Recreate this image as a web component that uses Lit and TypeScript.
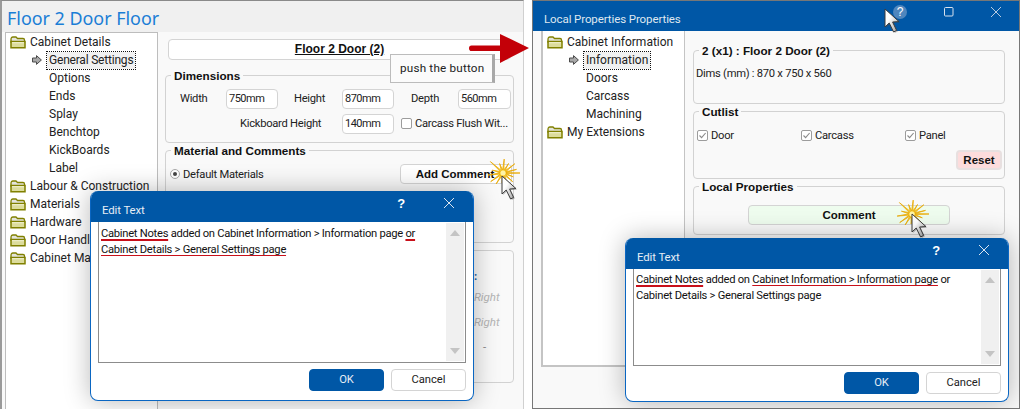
import { LitElement, html, css, svg } from "lit";
import { customElement } from "lit/decorators.js";

const folder = html`<svg class="folder" width="16" height="13" viewBox="0 0 16 13">
  <path d="M1 3.5 Q1 1 3 1 H6 L7.5 2.5 H13 Q14.5 2.5 14.5 4 V6 H1 Z" fill="#e4e4dc" stroke="#808000" stroke-width="1.3"/>
  <path d="M1 5.5 H15 V11.8 H1 Z" fill="#dcdc9c" stroke="#808000" stroke-width="1.5"/>
  <path d="M2 6.7 H14" stroke="#f6f6d8" stroke-width="1"/>
</svg>`;

const arrowIcon = html`<svg class="arrow-ic" width="10" height="10" viewBox="0 0 10 10">
  <path d="M.5 3 H4.5 V.6 L9.4 5 L4.5 9.4 V7 H.5 Z" fill="#a8a8a8" stroke="#4c4c4c" stroke-width="1"/>
</svg>`;

function starPoints(): string {
  const rays: [number, number][] = [
    [0, 17], [20, 11], [42, 13], [68, 11], [95, 10], [122, 13], [145, 15], [172, 15],
    [195, 11], [222, 17], [250, 10], [275, 14], [300, 11], [322, 15], [345, 14],
  ];
  const pts: string[] = [];
  rays.forEach(([a, r], i) => {
    const next = rays[(i + 1) % rays.length][0] + (i === rays.length - 1 ? 360 : 0);
    const mid = ((a + next) / 2) * Math.PI / 180;
    const rad = a * Math.PI / 180;
    pts.push(`${(20 + r * Math.cos(rad)).toFixed(1)},${(20 + r * Math.sin(rad)).toFixed(1)}`);
    pts.push(`${(20 + 3 * Math.cos(mid)).toFixed(1)},${(20 + 3 * Math.sin(mid)).toFixed(1)}`);
  });
  return pts.join(" ");
}

const cursorPath = svg`<path d="M1 1 L1 19 L5.2 15 L9.6 24 L12.6 22.4 L8.6 14 L15 13.6 Z" fill="#4a4a4a" opacity=".35" transform="translate(1.2 1)"/>
  <path d="M1 1 L1 19 L5.2 15 L9.6 24 L12.6 22.4 L8.6 14 L15 13.6 Z" fill="url(#cg)" stroke="#3c3c3c" stroke-width="1"/>`;

const cursorDefs = svg`<defs><linearGradient id="cg" x1="0" y1="0" x2="1" y2="1"><stop offset=".35" stop-color="#fff"/><stop offset="1" stop-color="#9a9a9a"/></linearGradient></defs>`;

@customElement("app-root")
export class AppRoot extends LitElement {
  static styles = css`
    :host { display: block; width: 1020px; height: 409px; position: relative; overflow: hidden; background: #fff;
      font-family: "Roboto", "Noto Sans", sans-serif; font-size: 11.2px; letter-spacing: -.27px; color: #222; }
    .win { position: absolute; top: 0; bottom: 0; display: flex; flex-direction: column; background: #f9f9f9; box-sizing: border-box; }
    .win.l { left: 0; width: 524px; border-top: 1px solid #8a8a8a; border-left: 2px solid #9a9a9a; border-right: 1px solid #d0d0d0; }
    .win.r { left: 532px; width: 488px; border: 1px solid #777; }
    .lhead { height: 31px; flex: none; background: #f0f0f0; padding-left: 5px; box-sizing: border-box; font-family: "Noto Sans", sans-serif; font-size: 17.9px; letter-spacing: 0; color: #1b7ed6; line-height: 35px; }
    .rhead { height: 30px; flex: none; background: #0057a6; padding: 11px 0 0 11px; box-sizing: border-box; color: #dfe7f0; line-height: 14px; font-size: 11.5px; letter-spacing: -.1px; }
    .body { flex: 1; display: flex; min-height: 0; }
    .tree { background: #fff; box-sizing: border-box; flex: none; font-size: 12px; letter-spacing: 0; }
    .win.l .tree { width: 153px; margin-left: 3px; border: 1px solid #bdbdbd; border-bottom: 0; height: 378px; overflow: hidden; }
    .win.l .sel { letter-spacing: -.2px; }
    .win.r .tree { width: 144px; margin-left: 8px; height: 336px; padding-top: 2px; border: 1px solid #c4c4c4; border-width: 0 1px 2px 2px; }
    .ti { height: 18px; display: flex; align-items: center; line-height: 18px; white-space: nowrap; position: relative; }
    .ti.top { padding-left: 4px; gap: 4px; }
    .ti.sub { padding-left: 43px; }
    .ti .arrow-ic { position: absolute; left: 26px; top: 4px; }
    .sel { outline: 1px dotted #111; background: #f1f1f1; padding: 0 2px; margin-left: -2px; height: 17px; line-height: 17px; }
    .panel { flex: 1; padding: 7px 9px 0 7px; min-width: 0; }
    .win.r .panel { padding: 19px 14px 0 8px; }
    .title-btn { margin-left: 3px; width: 343px; height: 21px; box-sizing: border-box; background: #fff; border: 1px solid #d4d4d4; border-radius: 4px;
      font: bold 12px "Liberation Sans", sans-serif; letter-spacing: 0; text-align: center; line-height: 18px; text-decoration: underline; color: #111; }
    .group { border: 1px solid #d2d2d2; border-radius: 4px; box-sizing: border-box; margin-top: 7px; }
    .legend { font: bold 11.7px "Liberation Sans", sans-serif; letter-spacing: 0; color: #111; background: #f9f9f9; width: fit-content; margin: -7px 0 0 5px; padding: 0 3px; height: 14px; line-height: 14px; }
    .grid { display: grid; grid-template-columns: 46px 52px 16px 48px 52px 17px 47px 53px; grid-auto-rows: 20px; row-gap: 5px; margin: 6px 0 0 14px; align-items: center; }
    .grid > span { padding-bottom: 2px; }
    .field { background: #fff; border: 1px solid #d4d4d4; border-radius: 4px; height: 20px; box-sizing: border-box; padding-left: 2px; line-height: 18px; font-size: 11px; letter-spacing: -.5px; }
    .kick { grid-column: 1 / 5; padding-left: 60px; }
    .flush { grid-column: 6 / 9; display: flex; align-items: center; gap: 3px; padding-left: 7px; white-space: nowrap; }
    .cb { width: 11px; height: 11px; border: 1px solid #9c9c9c; border-radius: 2px; background: #fff; box-sizing: border-box; flex: none; display: inline-flex; }
    .cb svg { display: block; }
    .matrow { display: flex; justify-content: space-between; align-items: flex-start; margin: 6px 1px 0 4px; }
    .radio { display: flex; align-items: center; gap: 3px; height: 20px; }
    .rd { width: 10px; height: 10px; border: 1px solid #aaa; border-radius: 50%; box-sizing: border-box; display: grid; place-items: center; background: #fff; }
    .rd::after { content: ""; width: 4px; height: 4px; border-radius: 50%; background: #444; }
    .btn { border: 1px solid #d4d4d4; border-radius: 4px; background: #fff; box-sizing: border-box; font: bold 11.5px "Liberation Sans", sans-serif; letter-spacing: 0; text-align: center; color: #111; white-space: nowrap; }
    .add { width: 112px; height: 20px; line-height: 18px; padding-right: 2px; }
    .rights { display: flex; flex-direction: column; align-items: flex-start; margin: 17px 0 0 308px; color: #b5b5b5; font-style: italic; font-size: 11.5px; letter-spacing: 0; }
    .rights span { height: 25px; line-height: 16px; }
    .rights .glyph { height: 21px; color: #1a5fa8; font-style: normal; font-weight: bold; }
    .rights .dash { height: 16px; color: #888; font-style: normal; padding-left: 9px; }
    .dims { margin: 8px 0 0 2px; line-height: 16px; }
    .checks { display: grid; grid-template-columns: 104px 104px auto; margin: 8px 0 0 3px; }
    .chk { display: flex; align-items: center; gap: 3px; height: 16px; }
    .resetrow { display: flex; justify-content: flex-end; margin: 7px 2px 0 0; }
    .reset { width: 46px; height: 20px; line-height: 16px; background: #fddcdc; border: 2px solid #e8e0e0; border-radius: 4px; }
    .comment { margin: 11px 0 0 54px; width: 202px; height: 20px; line-height: 18px; background: #eefcee; }
    .dlg { position: absolute; display: flex; flex-direction: column; background: #fff; border: 1px solid #0a66c2; border-top: 0; border-radius: 8px; box-sizing: border-box; box-shadow: 0 0 26px rgba(0,0,0,.28); overflow: hidden; }
    .dlg.l { left: 90px; top: 191px; width: 384px; height: 210px; }
    .dlg.r { left: 625px; top: 238px; width: 384px; height: 164px; }
    .dh { height: 31px; flex: none; background: #0057a6; color: #e6edf5; display: flex; align-items: center; padding: 6px 0 0 11px; box-sizing: border-box; position: relative; font-size: 11.4px; letter-spacing: -.1px; }
    .dh .q { position: absolute; right: 68px; top: 5px; font: bold 13px "Liberation Sans", sans-serif; color: #fff; }
    .dh svg { position: absolute; right: 18px; top: 6px; }
    .ta { flex: 1; margin: 0 7px; border: 1px solid #8c8c8c; border-top: 0; display: flex; min-height: 0; }
    .txt { flex: 1; padding: 4px 0 0 2px; line-height: 16px; color: #111; white-space: nowrap; overflow: hidden; }
    .dlg.r .txt { padding-top: 3px; }
    .u { text-decoration: underline; text-decoration-color: #c8101a; text-underline-offset: 2px; text-decoration-thickness: 1px; }
    .u2 { text-decoration-thickness: 2px; }
    .sb { width: 18px; flex: none; margin: 1px; background: #f0f0f0; display: flex; flex-direction: column; justify-content: space-between; align-items: center; padding: 7px 0; box-sizing: border-box; }
    .tri-u { width: 0; height: 0; border: 5px solid transparent; border-top: 0; border-bottom: 6px solid #c4c4c4; }
    .tri-d { width: 0; height: 0; border: 5px solid transparent; border-bottom: 0; border-top: 6px solid #c4c4c4; }
    .df { flex: none; display: flex; justify-content: flex-end; gap: 7px; padding: 6px 7px 9px 0; }
    .dlg.r .df { padding: 6px 7px 7px 0; }
    .dbtn { width: 75px; height: 22px; box-sizing: border-box; border-radius: 4px; border: 1px solid #d4d4d4; background: #fff; text-align: center; line-height: 20px; color: #222; font-size: 11.2px; letter-spacing: 0; }
    .dbtn.ok { background: #0057a6; color: #e6edf5; border-color: #0057a6; }
    .tip { position: absolute; left: 390px; top: 54px; width: 105px; height: 29px; box-sizing: border-box; background: #fbfbfb; border: 1px solid #bcbcbc; border-right: 3px solid #a8a8a8; padding-left: 9px; line-height: 26px; font-size: 11.7px; letter-spacing: .2px; white-space: nowrap; }
    .overlay { position: absolute; pointer-events: none; overflow: visible; }
    .help { position: absolute; left: 893px; top: 5px; width: 14px; height: 14px; border-radius: 50%; background: #4f86bd; color: #fff; font: 12px "Liberation Sans", sans-serif; text-align: center; line-height: 14px; }
  `;

  private star(x: number, y: number) {
    return html`<svg class="overlay" style="left:${x - 20}px;top:${y - 20}px" width="40" height="40" viewBox="0 0 40 40">
      <polygon points=${starPoints()} fill="#f7d23a" stroke="#e8a908" stroke-width=".8"/>
      <circle cx="20" cy="20" r="2.5" fill="#fff3a8"/></svg>`;
  }
  private cursor(x: number, y: number) {
    return html`<svg class="overlay" style="left:${x - 1}px;top:${y - 1}px" width="18" height="27" viewBox="0 0 18 27">${cursorDefs}${cursorPath}</svg>`;
  }
  private closeX(c = "#dbe5f0") {
    return html`<svg width="12" height="12" viewBox="0 0 12 12"><path d="M1 1 L11 11 M11 1 L1 11" stroke=${c} stroke-width="1" fill="none"/></svg>`;
  }
  private check() {
    return html`<span class="cb"><svg width="9" height="9" viewBox="0 0 9 9"><path d="M1.5 4.5 L3.6 6.6 L7.6 2" stroke="#8a8a8a" stroke-width="1.1" fill="none"/></svg></span>`;
  }
  private dialog(cls: string, body: unknown) {
    return html`<div class="dlg ${cls}">
      <div class="dh">Edit Text<span class="q">?</span>${this.closeX()}</div>
      <div class="ta"><div class="txt">${body}</div><div class="sb"><i class="tri-u"></i><i class="tri-d"></i></div></div>
      <div class="df"><div class="dbtn ok">OK</div><div class="dbtn">Cancel</div></div>
    </div>`;
  }

  render() {
    const subsL = ["Options", "Ends", "Splay", "Benchtop", "KickBoards", "Label"];
    const topsL = ["Labour & Construction", "Materials", "Hardware", "Door Handles", "Cabinet Materials"];
    return html`
      <div class="win l">
        <div class="lhead">Floor 2 Door Floor</div>
        <div class="body">
          <div class="tree">
            <div class="ti top">${folder}Cabinet Details</div>
            <div class="ti sub">${arrowIcon}<span class="sel">General Settings</span></div>
            ${subsL.map((s) => html`<div class="ti sub">${s}</div>`)}
            ${topsL.map((s) => html`<div class="ti top">${folder}${s}</div>`)}
          </div>
          <div class="panel">
            <div class="title-btn">Floor 2 Door (2)</div>
            <div class="group" style="height:68px;margin-top:15px">
              <div class="legend">Dimensions</div>
              <div class="grid">
                <span>Width</span><div class="field">750mm</div><span></span>
                <span>Height</span><div class="field">870mm</div><span></span>
                <span>Depth</span><div class="field">560mm</div>
                <span class="kick">Kickboard Height</span><div class="field">140mm</div>
                <span class="flush"><span class="cb"></span>Carcass Flush Wit...</span>
              </div>
            </div>
            <div class="group" style="height:93px">
              <div class="legend">Material and Comments</div>
              <div class="matrow">
                <span class="radio"><span class="rd"></span>Default Materials</span>
                <div class="btn add">Add Comment</div>
              </div>
            </div>
            <div class="group" style="height:133px">
              <div class="rights"><span class="glyph">:</span><span>Right</span><span>Right</span><span class="dash">-</span></div>
            </div>
          </div>
        </div>
      </div>

      <div class="win r">
        <div class="rhead">Local Properties Properties</div>
        <div class="body">
          <div class="tree">
            <div class="ti top">${folder}Cabinet Information</div>
            <div class="ti sub">${arrowIcon}<span class="sel">Information</span></div>
            <div class="ti sub">Doors</div>
            <div class="ti sub">Carcass</div>
            <div class="ti sub">Machining</div>
            <div class="ti top">${folder}My Extensions</div>
          </div>
          <div class="panel">
            <div class="group" style="height:54px;margin-top:0">
              <div class="legend">2 (x1) : Floor 2 Door (2)</div>
              <div class="dims">Dims (mm) : 870 x 750 x 560</div>
            </div>
            <div class="group" style="height:68px">
              <div class="legend">Cutlist</div>
              <div class="checks">
                <span class="chk">${this.check()}Door</span>
                <span class="chk">${this.check()}Carcass</span>
                <span class="chk">${this.check()}Panel</span>
              </div>
              <div class="resetrow"><div class="btn reset">Reset</div></div>
            </div>
            <div class="group" style="height:49px">
              <div class="legend">Local Properties</div>
              <div class="btn comment">Comment</div>
            </div>
          </div>
        </div>
      </div>

      <svg class="overlay" style="left:944px;top:7px" width="10" height="10" viewBox="0 0 10 10"><rect x=".5" y=".5" width="8.5" height="8.5" rx="1" fill="none" stroke="#d8e2ee"/></svg>
      <svg class="overlay" style="left:990px;top:6px" width="12" height="12" viewBox="0 0 12 12"><path d="M1 1 L11 11 M11 1 L1 11" stroke="#b8cbe0" fill="none"/></svg>
      <div class="help">?</div>
      ${this.cursor(885, 9)}

      <svg class="overlay" style="left:469px;top:33px" width="62" height="32" viewBox="0 0 62 32">
        <path d="M2.5 12.5 H31 V1 L60 15 L31 30 V18 H2.5 Q0 18 0 15.2 Q0 12.5 2.5 12.5 Z" fill="#c30008"/>
      </svg>
      <div class="tip">push the button</div>

      ${this.star(503, 173)} ${this.cursor(502, 176)}
      ${this.star(912, 214)} ${this.cursor(912, 214)}

      ${this.dialog("l", html`<span class="u u2">Cabinet Notes</span> added on Cabinet Information &gt; Information page <span class="u u2">or</span><br><span class="u">Cabinet Details &gt; General Settings page</span>`)}
      ${this.dialog("r", html`<span class="u u2">Cabinet Notes</span> added on <span class="u">Cabinet Information &gt; Information page</span> or<br>Cabinet Details &gt; General Settings page`)}
    `;
  }
}
